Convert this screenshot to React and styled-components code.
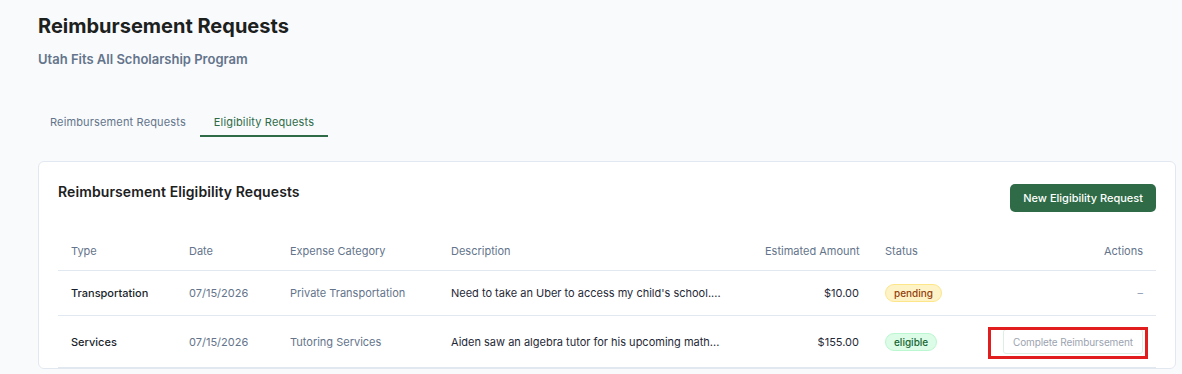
import React from 'react';
import styled, { createGlobalStyle } from 'styled-components';

const GlobalStyle = createGlobalStyle`
  body {
    margin: 0;
    background: #f8fafc;
    font-family: Inter, "Liberation Sans", sans-serif;
    -webkit-font-smoothing: antialiased;
  }
`;

const Page = styled.div`
  padding: 14px 6px 0 38px;
`;

const Title = styled.h1`
  margin: 0;
  font-size: 20px;
  line-height: 24px;
  font-weight: 700;
  color: #1c211e;
`;

const Subtitle = styled.h2`
  margin: 12px 0 0;
  font-size: 13px;
  line-height: 18px;
  font-weight: 600;
  color: #64748b;
`;

const Tabs = styled.div`
  display: flex;
  margin: 40px 0 0 -2px;
`;

const Tab = styled.button`
  border: none;
  background: none;
  font-family: inherit;
  font-size: 11px;
  line-height: 14px;
  letter-spacing: 0.15px;
  padding: 7px 14px 6px;
  color: ${p => (p.$active ? '#2f6b47' : '#64748b')};
  border-bottom: 2px solid ${p => (p.$active ? '#2f6b47' : 'transparent')};
  cursor: pointer;
`;

const Card = styled.section`
  margin-top: 24px;
  background: #fff;
  border: 1px solid #e2e8f0;
  border-radius: 6px;
  padding: 20px 19px 0;
`;

const CardHeader = styled.div`
  display: flex;
  justify-content: space-between;
  align-items: flex-start;
`;

const CardTitle = styled.h3`
  margin: 0;
  font-size: 14px;
  line-height: 20px;
  font-weight: 600;
  letter-spacing: 0.1px;
  color: #1c211e;
`;

const PrimaryButton = styled.button`
  margin-top: 2px;
  height: 28px;
  padding: 0 13px;
  border: none;
  border-radius: 5px;
  background: #2e6b46;
  color: #fff;
  font-family: inherit;
  font-size: 11px;
  font-weight: 500;
`;

const Table = styled.div`
  margin-top: 20px;
`;

const Row = styled.div`
  display: grid;
  grid-template-columns: 118px 101px 161px 314px 120px 100px 1fr;
  align-items: center;
  border-bottom: 1px solid #e2e8f0;
  min-height: ${p => p.$h || 44}px;
`;

const Cell = styled.div`
  padding: 0 13px;
  font-size: 11px;
  line-height: 16px;
  white-space: nowrap;
  text-align: ${p => (p.$right ? 'right' : 'left')};
  color: ${p => p.$color || '#1f2937'};
  font-weight: ${p => p.$weight || 400};
`;

const HeadCell = styled(Cell)`
  color: #64748b;
`;

const Badge = styled.span`
  display: inline-block;
  padding: 1px 8px;
  border-radius: 9px;
  font-size: 10px;
  line-height: 14px;
  font-weight: 500;
  background: ${p => (p.$tone === 'yellow' ? '#fef3c7' : '#dcfce7')};
  border: 1px solid ${p => (p.$tone === 'yellow' ? '#fde68a' : '#bbf7d0')};
  color: ${p => (p.$tone === 'yellow' ? '#92400e' : '#166534')};
`;

const Dash = styled.span`
  color: #94a3b8;
`;

const GhostButton = styled.button`
  position: relative;
  height: 25px;
  padding: 0 9px;
  background: #fff;
  border: 1px solid #dcefe2;
  border-radius: 3px;
  color: #9ca3af;
  font-family: inherit;
  font-size: 10px;
  letter-spacing: -0.1px;

  &::after {
    content: '';
    position: absolute;
    top: -3px;
    bottom: -6px;
    left: -16px;
    right: -6px;
    border: 3px solid #e11d1d;
    pointer-events: none;
  }
`;

const rows = [
  {
    type: 'Transportation',
    date: '07/15/2026',
    category: 'Private Transportation',
    desc: "Need to take an Uber to access my child's school....",
    amount: '$10.00',
    status: 'pending',
  },
  {
    type: 'Services',
    date: '07/15/2026',
    category: 'Tutoring Services',
    desc: 'Aiden saw an algebra tutor for his upcoming math...',
    amount: '$155.00',
    status: 'eligible',
  },
];

export default function App() {
  return (
    <>
      <GlobalStyle />
      <Page>
        <Title>Reimbursement Requests</Title>
        <Subtitle>Utah Fits All Scholarship Program</Subtitle>
        <Tabs>
          <Tab>Reimbursement Requests</Tab>
          <Tab $active>Eligibility Requests</Tab>
        </Tabs>
        <Card>
          <CardHeader>
            <CardTitle>Reimbursement Eligibility Requests</CardTitle>
            <PrimaryButton>New Eligibility Request</PrimaryButton>
          </CardHeader>
          <Table>
            <Row $h={38}>
              <HeadCell>Type</HeadCell>
              <HeadCell>Date</HeadCell>
              <HeadCell>Expense Category</HeadCell>
              <HeadCell>Description</HeadCell>
              <HeadCell $right>Estimated Amount</HeadCell>
              <HeadCell>Status</HeadCell>
              <HeadCell $right>Actions</HeadCell>
            </Row>
            {rows.map(r => (
              <Row key={r.type} $h={r.status === 'eligible' ? 51 : 44}>
                <Cell $weight={500} $color="#1a1f2b">{r.type}</Cell>
                <Cell $color="#64748b">{r.date}</Cell>
                <Cell $color="#64748b">{r.category}</Cell>
                <Cell>{r.desc}</Cell>
                <Cell $right>{r.amount}</Cell>
                <Cell>
                  <Badge $tone={r.status === 'pending' ? 'yellow' : 'green'}>{r.status}</Badge>
                </Cell>
                <Cell $right>
                  {r.status === 'eligible'
                    ? <GhostButton>Complete Reimbursement</GhostButton>
                    : <Dash>–</Dash>}
                </Cell>
              </Row>
            ))}
          </Table>
        </Card>
      </Page>
    </>
  );
}
